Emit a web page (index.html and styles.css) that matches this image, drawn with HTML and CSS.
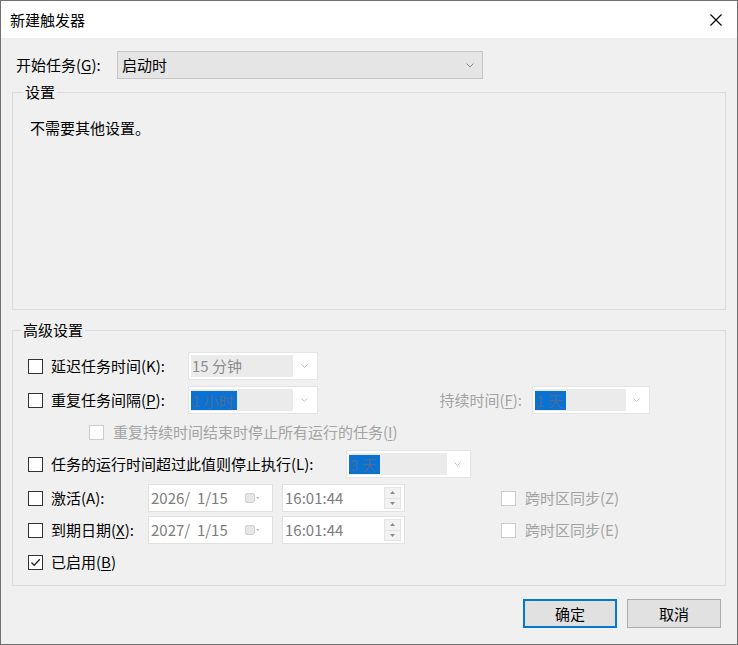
FILE: index.html
```html
<!DOCTYPE html>
<html lang="zh-CN">
<head>
<meta charset="utf-8">
<title>新建触发器</title>
<link rel="stylesheet" href="styles.css">
</head>
<body>
<div class="window">
  <div class="titlebar">
    <span class="title">新建触发器</span>
    <svg class="close" width="12" height="12" viewBox="0 0 12 12"><path d="M0.5 0.5L11.5 11.5M11.5 0.5L0.5 11.5" stroke="#000" stroke-width="1.1" fill="none"/></svg>
  </div>
  <div class="body">
    <div class="start-row">
      <span class="start-label">开始任务(<u>G</u>):</span>
      <div class="combo">
        <span>启动时</span>
        <svg class="chev" width="8" height="5" viewBox="0 0 8 5"><path d="M0.5 0.5L4 4L7.5 0.5" stroke="#8a8a8a" stroke-width="1" fill="none"/></svg>
      </div>
    </div>

    <fieldset class="group settings">
      <legend class="legend-settings">设置</legend>
      <div class="note">不需要其他设置。</div>
    </fieldset>

    <fieldset class="group advanced">
      <legend class="legend-advanced">高级设置</legend>
      <div class="rows">
        <div class="row">
          <label class="chk w160"><span class="box"></span>延迟任务时间(K):</label>
          <div class="dcombo w130">
            <span class="field f102"><span class="val">15 分钟</span></span>
            <span class="dchev"><svg width="7" height="4" viewBox="0 0 7 4"><path d="M0.5 0.5L3.5 3.5L6.5 0.5" stroke="#c4c4c4" stroke-width="1" fill="none"/></svg></span>
          </div>
        </div>

        <div class="row gap6">
          <label class="chk w160"><span class="box"></span>重复任务间隔(<u>P</u>):</label>
          <div class="dcombo w130">
            <span class="field f102"><span class="sel">1 小时</span></span>
            <span class="dchev"><svg width="7" height="4" viewBox="0 0 7 4"><path d="M0.5 0.5L3.5 3.5L6.5 0.5" stroke="#c4c4c4" stroke-width="1" fill="none"/></svg></span>
          </div>
          <span class="dur-label disabled">持续时间(<u>F</u>):</span>
          <div class="dcombo w118">
            <span class="field f91"><span class="sel">1 天</span></span>
            <span class="dchev"><svg width="7" height="4" viewBox="0 0 7 4"><path d="M0.5 0.5L3.5 3.5L6.5 0.5" stroke="#c4c4c4" stroke-width="1" fill="none"/></svg></span>
          </div>
        </div>

        <div class="row gap4 indent">
          <label class="chk disabled"><span class="box dbox"></span>重复持续时间结束时停止所有运行的任务(<u>I</u>)</label>
        </div>

        <div class="row gap4">
          <label class="chk w318"><span class="box"></span>任务的运行时间超过此值则停止执行(L):</label>
          <div class="dcombo w125">
            <span class="field f98"><span class="sel">3 天</span></span>
            <span class="dchev"><svg width="7" height="4" viewBox="0 0 7 4"><path d="M0.5 0.5L3.5 3.5L6.5 0.5" stroke="#c4c4c4" stroke-width="1" fill="none"/></svg></span>
          </div>
        </div>

        <div class="row gap6">
          <label class="chk w120"><span class="box"></span>激活(A):</label>
          <div class="date">
            <span class="dval">2026/  1/15</span>
            <svg class="cal" width="15" height="10" viewBox="0 0 15 10"><rect x="0.5" y="0.5" width="9" height="9" rx="1.5" fill="#e6e6e6" stroke="#d0d0d0"/><path d="M11 4H14.5L12.75 6Z" fill="#b5b5b5"/></svg>
          </div>
          <div class="time">
            <span class="dval">16:01:44</span>
            <span class="spin">
              <span class="sbtn"><svg width="5" height="3" viewBox="0 0 5 3"><path d="M0 3L2.5 0L5 3Z" fill="#8a8a8a"/></svg></span>
              <span class="sbtn"><svg width="5" height="3" viewBox="0 0 5 3"><path d="M0 0L2.5 3L5 0Z" fill="#8a8a8a"/></svg></span>
            </span>
          </div>
          <label class="chk disabled sync"><span class="box dbox"></span>跨时区同步(Z)</label>
        </div>

        <div class="row gap4">
          <label class="chk w120"><span class="box"></span>到期日期(<u>X</u>):</label>
          <div class="date">
            <span class="dval">2027/  1/15</span>
            <svg class="cal" width="15" height="10" viewBox="0 0 15 10"><rect x="0.5" y="0.5" width="9" height="9" rx="1.5" fill="#e6e6e6" stroke="#d0d0d0"/><path d="M11 4H14.5L12.75 6Z" fill="#b5b5b5"/></svg>
          </div>
          <div class="time">
            <span class="dval">16:01:44</span>
            <span class="spin">
              <span class="sbtn"><svg width="5" height="3" viewBox="0 0 5 3"><path d="M0 3L2.5 0L5 3Z" fill="#8a8a8a"/></svg></span>
              <span class="sbtn"><svg width="5" height="3" viewBox="0 0 5 3"><path d="M0 0L2.5 3L5 0Z" fill="#8a8a8a"/></svg></span>
            </span>
          </div>
          <label class="chk disabled sync"><span class="box dbox"></span>跨时区同步(E)</label>
        </div>

        <div class="row gap4">
          <label class="chk"><span class="box"><svg width="13" height="13" viewBox="0 0 13 13"><path d="M2.5 6.5L5.2 9.3L10.8 3.2" stroke="#222" stroke-width="1.3" fill="none"/></svg></span>已启用(<u>B</u>)</label>
        </div>
      </div>
    </fieldset>

    <div class="buttons">
      <button class="btn default">确定</button>
      <button class="btn">取消</button>
    </div>
  </div>
</div>
</body>
</html>
```
FILE: styles.css
```css
* { box-sizing: border-box; }
html, body { margin: 0; padding: 0; }
body {
  font-family: "Noto Sans CJK SC", "Liberation Sans", sans-serif;
  font-size: 15px;
  line-height: 20px;
  color: #000;
  background: #f0f0f0;
}
u { text-decoration: underline; text-underline-offset: 2px; }

.window {
  width: 738px;
  height: 645px;
  border: 1px solid #707070;
  background: #f0f0f0;
  display: flex;
  flex-direction: column;
}
.titlebar {
  height: 37px;
  flex: 0 0 37px;
  background: #fff;
  display: flex;
  align-items: center;
  justify-content: space-between;
  padding: 0 15px 0 9px;
}
.close { display: block; }

.body {
  padding: 13px 11px 0 11px;
  display: flex;
  flex-direction: column;
}

.start-row { display: flex; align-items: center; height: 28px; }
.start-label { width: 105px; padding-left: 4px; white-space: nowrap; }
.combo {
  width: 366px;
  height: 28px;
  background: #e5e5e5;
  border: 1px solid #c6c6c6;
  display: flex;
  align-items: center;
  justify-content: space-between;
  padding: 0 8px 0 4px;
}
.chev { display: block; }

.group {
  margin: 0;
  padding: 0;
  border: 1px solid #dcdcdc;
  min-width: 0;
}
.group legend { padding: 0 2px; line-height: 20px; }
.legend-settings { margin-left: 10px; }
.legend-advanced { margin-left: 8px; }

.settings { margin-top: 3px; height: 228px; }
.note { padding: 16px 0 0 17px; }

.advanced { margin-top: 10px; height: 266px; }
.rows { padding: 12px 0 9px 15px; display: flex; flex-direction: column; }

.row { display: flex; align-items: center; height: 28px; }
.gap6 { margin-top: 6px; }
.gap4 { margin-top: 4px; }
.indent { padding-left: 61px; }

.chk { display: flex; align-items: center; white-space: nowrap; }
.w160 { width: 160px; }
.w318 { width: 318px; }
.w120 { width: 120px; }
.box {
  width: 15px;
  height: 15px;
  border: 1px solid #333;
  background: #fff;
  margin-right: 8px;
  display: flex;
  align-items: center;
  justify-content: center;
  flex: 0 0 15px;
}
.box svg { display: block; }
.dbox { border-color: #cccccc; margin-right: 9px; }
.disabled { color: #a3a3a3; }

.dcombo {
  height: 28px;
  background: #fff;
  border: 1px solid #e4e4e4;
  padding: 2px;
  display: flex;
  align-items: center;
}
.w130 { width: 130px; }
.w118 { width: 118px; }
.w125 { width: 125px; }
.field {
  height: 22px;
  background: #ebebeb;
  display: flex;
  align-items: center;
  flex: 0 0 auto;
}
.f102 { width: 102px; }
.f91 { width: 91px; }
.f98 { width: 98px; }
.val { color: #8c8c8c; padding-left: 1px; }
.sel {
  background: #0a72d2;
  color: #4a6d98;
  height: 19px;
  line-height: 19px;
  padding: 0 3px 0 1px;
  white-space: pre;
}
.dchev { flex: 1; display: flex; justify-content: center; }
.dchev svg { display: block; }

.dur-label { width: 204px; text-align: right; margin-right: 10px; white-space: nowrap; }

.date {
  width: 125px;
  height: 28px;
  background: #fff;
  border: 1px solid #e0e0e0;
  display: flex;
  align-items: center;
  justify-content: space-between;
  padding: 0 12px 0 2px;
}
.dval { color: #7d7d7d; white-space: pre; }
.cal { display: block; }
.time {
  width: 123px;
  height: 28px;
  margin-left: 9px;
  background: #fff;
  border: 1px solid #e0e0e0;
  display: flex;
  align-items: center;
  justify-content: space-between;
  padding: 2px 3px 2px 2px;
}
.spin {
  width: 17px;
  height: 22px;
  display: flex;
  flex-direction: column;
  border: 1px solid #e3e3e3;
  background: #f2f2f2;
}
.sbtn {
  flex: 1;
  display: flex;
  align-items: center;
  justify-content: center;
}
.sbtn + .sbtn { border-top: 1px solid #e3e3e3; }
.sbtn svg { display: block; }
.sync { margin-left: 96px; }

.buttons {
  display: flex;
  justify-content: flex-end;
  gap: 10px;
  margin-top: 13px;
  margin-right: 5px;
}
.btn {
  width: 94px;
  height: 29px;
  font-family: inherit;
  font-size: 15px;
  line-height: 20px;
  color: #000;
  background: #e1e1e1;
  border: 1px solid #adadad;
  padding: 0;
}
.btn.default { border: 2px solid #0078d7; }
```
